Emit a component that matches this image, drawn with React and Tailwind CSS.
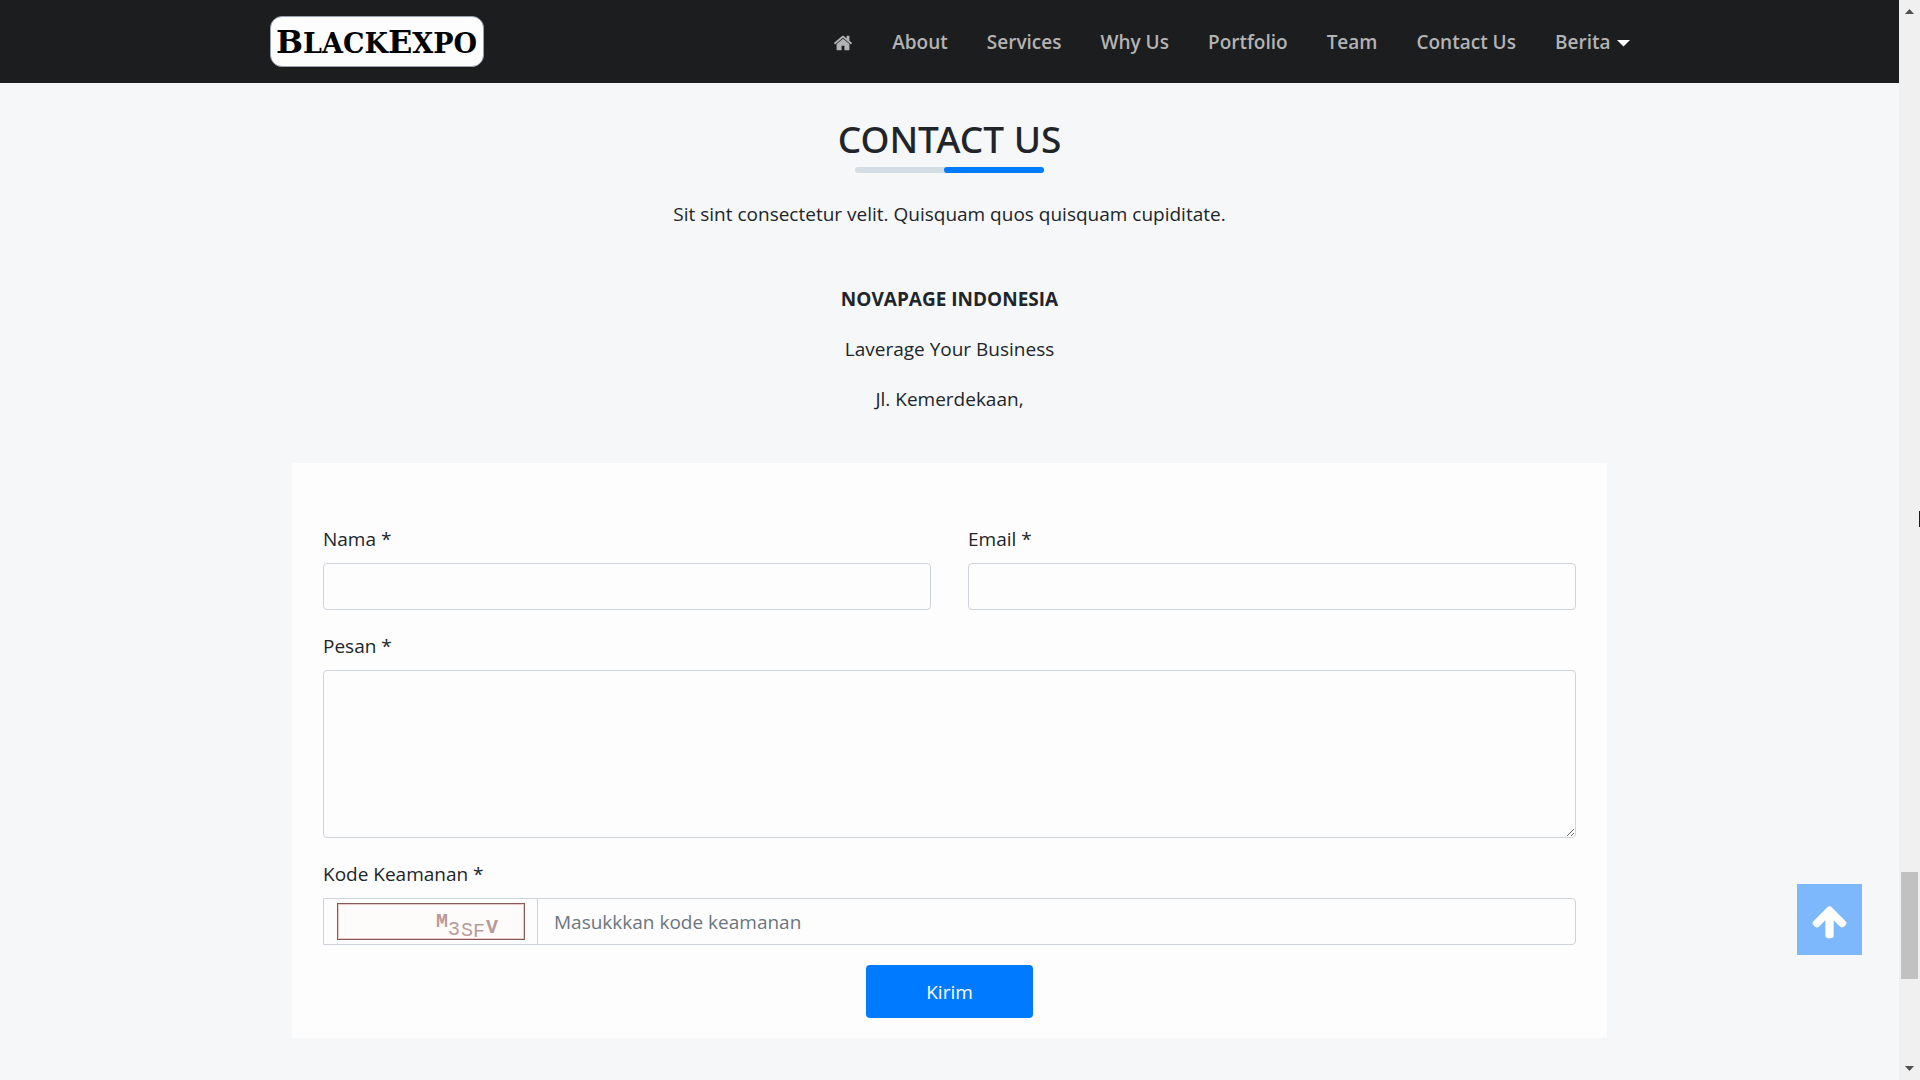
import React, { useState } from 'react';

const navLinks = [
  { label: 'About', href: '#about' },
  { label: 'Services', href: '#services' },
  { label: 'Why Us', href: '#why-us' },
  { label: 'Portfolio', href: '#portfolio' },
  { label: 'Team', href: '#team' },
  { label: 'Contact Us', href: '#contact' },
];

export default function App() {
  return (
    <div className="flex min-h-screen bg-[#f5f7f9] font-['Open_Sans',sans-serif] text-[19px] text-[#212529]">
      <div className="flex-1 min-w-0">
        <Header />
        <main>
          <ContactSection />
        </main>
      </div>
      <ScrollTrack />
      <BackToTop />
    </div>
  );
}

function Header() {
  return (
    <header className="sticky top-0 z-10 bg-[#1c1d1f]">
      <div className="max-w-[1424px] mx-auto px-8 py-4 flex items-center justify-between">
        <a
          href="#home"
          className="w-[214px] h-[51px] rounded-xl border border-gray-400 bg-[#fdfdfd] flex items-center justify-center font-['DejaVu_Serif',serif] font-bold text-[27px] leading-none text-black"
        >
          <span>
            <span className="text-[32px]">B</span>LACK<span className="text-[32px]">E</span>XPO
          </span>
        </a>

        <nav className="flex items-center gap-[39px] pt-0.5 font-semibold text-[#b3b3b4]">
          <a href="#home" aria-label="Home">
            <HomeIcon />
          </a>
          {navLinks.map(link => (
            <a key={link.href} href={link.href} className="hover:text-white">
              {link.label}
            </a>
          ))}
          <button type="button" className="flex items-center gap-1.5 hover:text-white">
            Berita
            <svg width="13" height="7" viewBox="0 0 13 7" className="mt-0.5" aria-hidden="true">
              <path d="M0 0h13L6.500 6.500z" fill="#fff" />
            </svg>
          </button>
        </nav>
      </div>
    </header>
  );
}

function ContactSection() {
  return (
    <section id="contact" className="px-8 pt-7 pb-10">
      <div className="text-center">
        <h2 className="font-['Noto_Sans',sans-serif] text-[37px] leading-14 font-medium">CONTACT US</h2>
        {/* Two-tone underline */}
        <div className="w-[189px] h-1.5 mx-auto rounded-full bg-[#d4dce4] flex justify-end">
          <div className="w-[100px] rounded-full bg-[#007bff]" />
        </div>
        <p className="mt-[25px] leading-8">Sit sint consectetur velit. Quisquam quos quisquam cupiditate.</p>

        <div className="mt-[54px] space-y-5 leading-[30px]">
          <p className="font-bold">NOVAPAGE INDONESIA</p>
          <p>Laverage Your Business</p>
          <p>Jl. Kemerdekaan,</p>
        </div>
      </div>

      <ContactForm />
    </section>
  );
}

function ContactForm() {
  const [form, setForm] = useState({ nama: '', email: '', pesan: '', kode: '' });
  const update = e => setForm({ ...form, [e.target.name]: e.target.value });

  return (
    <form
      onSubmit={e => e.preventDefault()}
      className="max-w-[1315px] mx-auto mt-[49px] px-[31px] pt-15 pb-5 bg-[#fdfdfd]"
    >
      <div className="grid grid-cols-1 md:grid-cols-2 gap-x-[37px] gap-y-5">
        <Field id="nama" label="Nama *">
          <input id="nama" name="nama" type="text" value={form.nama} onChange={update}
            className="block w-full h-[47px] px-4 rounded border border-[#ced4da] focus:outline-none" />
        </Field>
        <Field id="email" label="Email *">
          <input id="email" name="email" type="email" value={form.email} onChange={update}
            className="block w-full h-[47px] px-4 rounded border border-[#ced4da] focus:outline-none" />
        </Field>
        <div className="md:col-span-2">
          <Field id="pesan" label="Pesan *">
            <textarea id="pesan" name="pesan" value={form.pesan} onChange={update}
              className="block w-full h-[168px] px-4 py-2 rounded border border-[#ced4da] resize focus:outline-none" />
          </Field>
        </div>
        <div className="md:col-span-2">
          <Field id="kode" label="Kode Keamanan *">
            <div className="flex h-[47px] rounded-r border border-[#ced4da]">
              <div className="px-3 flex items-center border-r border-[#ced4da]">
                <Captcha />
              </div>
              <input id="kode" name="kode" type="text" value={form.kode} onChange={update}
                placeholder="Masukkkan kode keamanan"
                className="flex-1 min-w-0 px-4 pt-0.5 placeholder:text-[#6c757d] focus:outline-none" />
            </div>
          </Field>
        </div>
      </div>

      <button type="submit" className="block w-[167px] h-[53px] pt-0.5 mx-auto mt-5 rounded bg-[#007bff] text-white">
        Kirim
      </button>
    </form>
  );
}

function Field({ id, label, children }) {
  return (
    <div>
      <label htmlFor={id} className="block mb-2 leading-8">{label}</label>
      {children}
    </div>
  );
}

function Captcha() {
  return (
    <svg width="189" height="37" viewBox="0 0 189 37" className="overflow-visible" role="img" aria-label="Captcha">
      <rect x="2" y="1" width="186" height="35" fill="#fdfcfb" stroke="#ecc9c6" strokeWidth="2" />
      <rect x="1.500" y="0.500" width="187" height="36" fill="none" stroke="#86595a" />
      <g fontFamily="Liberation Mono, monospace" fontSize="20" fill="#b99a9a">
        <text x="100" y="24" fontWeight="bold">M</text>
        <text x="112" y="32">3</text>
        <text x="125" y="33">S</text>
        <text x="137" y="34">F</text>
        <text x="150" y="30" fontWeight="bold">V</text>
      </g>
    </svg>
  );
}

function HomeIcon() {
  return (
    <svg width="20" height="20" viewBox="0 0 1792 1792" fill="currentColor" aria-hidden="true">
      <path d="M1472 992v480q0 26-19 45t-45 19h-384v-384h-256v384h-384q-26 0-45-19t-19-45v-480q0-1 .5-3t.5-3l575-474 575 474q1 2 1 6zm223-69l-62 74q-8 9-21 11h-3q-13 0-21-7l-692-577-692 577q-12 8-24 7-13-2-21-11l-62-74q-8-10-7-23.500t11-21.500l719-599q32-26 76-26t76 26l244 204v-195q0-14 9-23t23-9h192q14 0 23 9t9 23v408l219 182q10 8 11 21.500t-7 23.500z" />
    </svg>
  );
}

function BackToTop() {
  return (
    <a
      href="#home"
      aria-label="Back to top"
      className="fixed z-20 right-[58px] bottom-[125px] w-[65px] h-[71px] pt-1 bg-[#7cb8fb] text-[#fdfdfd] flex items-center justify-center"
    >
      <svg width="39" height="39" viewBox="0 0 1792 1792" fill="currentColor" aria-hidden="true">
        <path d="M1675 971q0 51-37 90l-75 75q-38 38-91 38-54 0-90-38l-294-293v704q0 52-37.500 84.500t-90.500 32.500h-128q-53 0-90.500-32.500t-37.500-84.500v-704l-294 293q-36 38-90 38t-90-38l-75-75q-38-38-38-90 0-53 38-91l651-651q35-37 90-37 54 0 91 37l651 651q37 39 37 91z" />
      </svg>
    </a>
  );
}

function ScrollTrack() {
  return (
    <div className="sticky top-0 w-[21px] h-screen bg-[#f0f0f0] flex flex-col items-center" aria-hidden="true">
      <svg width="21" height="21" viewBox="0 0 21 21">
        <path d="M6 14L10.500 9L15 14z" fill="#505050" />
      </svg>
      <div className="grow-[851]" />
      <div className="w-[17px] h-[107px] bg-[#c1c1c1]" />
      <div className="grow-[80]" />
      <svg width="21" height="21" viewBox="0 0 21 21">
        <path d="M6 7h9L10.500 12z" fill="#505050" />
      </svg>
      <div className="absolute right-0 top-[511px] w-px h-4 bg-[#1c1c1c]" />
    </div>
  );
}
